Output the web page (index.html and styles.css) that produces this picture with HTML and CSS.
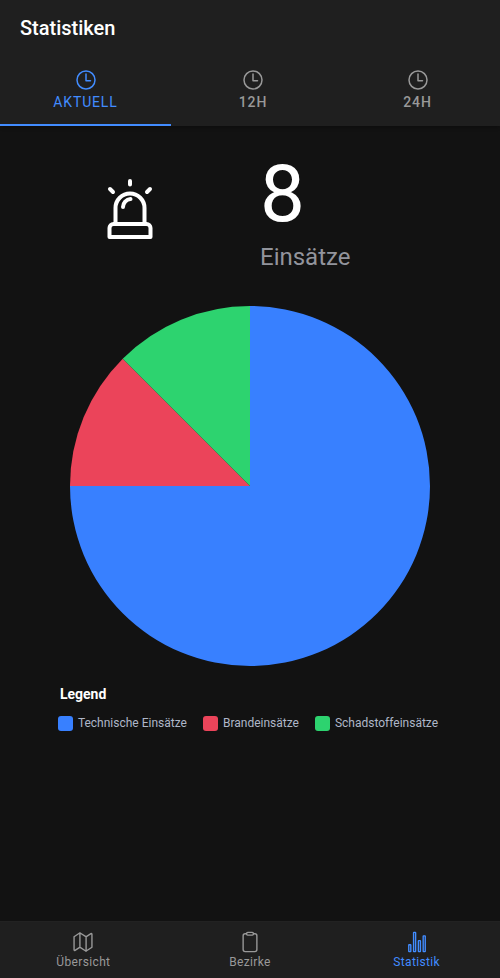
FILE: index.html
```html
<!DOCTYPE html>
<html lang="de">
<head>
<meta charset="utf-8">
<meta name="viewport" content="width=device-width, initial-scale=1">
<title>Statistiken</title>
<link rel="stylesheet" href="styles.css">
</head>
<body>
<header class="header">
  <h1 class="title">Statistiken</h1>
  <div class="segment">
    <button type="button" class="segment-button is-active" aria-pressed="true">
      <svg class="icon" viewBox="0 0 512 512" aria-hidden="true"><circle cx="256" cy="256" r="192"/><path d="M256 128v144h96"/></svg>
      <span>AKTUELL</span>
    </button>
    <button type="button" class="segment-button" aria-pressed="false">
      <svg class="icon" viewBox="0 0 512 512" aria-hidden="true"><circle cx="256" cy="256" r="192"/><path d="M256 128v144h96"/></svg>
      <span>12H</span>
    </button>
    <button type="button" class="segment-button" aria-pressed="false">
      <svg class="icon" viewBox="0 0 512 512" aria-hidden="true"><circle cx="256" cy="256" r="192"/><path d="M256 128v144h96"/></svg>
      <span>24H</span>
    </button>
  </div>
</header>

<main class="content">
  <section class="summary">
    <div class="summary-icon">
      <svg class="siren" viewBox="0 0 60 60" aria-hidden="true">
        <path d="M15.5 44V29a14.5 14.5 0 0 1 29 0V44"/>
        <path d="M9.500 58V49a4 4 0 0 1 4-4H46.500a4 4 0 0 1 4 4V58Z"/>
        <path d="M23 28a8 8 0 0 1 7.500-8"/>
        <path d="M30 2V5.500M10 10l3 3M50 10l-3 3"/>
      </svg>
    </div>
    <div class="summary-text">
      <div class="count">8</div>
      <div class="count-label">Einsätze</div>
    </div>
  </section>

  <section class="chart">
    <svg class="pie" viewBox="0 0 360 360" role="img" aria-label="Einsätze nach Art">
      <path class="fill-technical" d="M180 180V0A180 180 0 1 1 0 180Z"/>
      <path class="fill-fire" d="M180 180H0A180 180 0 0 1 52.720 52.720Z"/>
      <path class="fill-hazard" d="M180 180L52.720 52.720A180 180 0 0 1 180 0Z"/>
    </svg>
    <div class="legend">
      <h2 class="legend-title">Legend</h2>
      <ul class="legend-list">
        <li class="legend-item"><span class="swatch technical"></span>Technische Einsätze</li>
        <li class="legend-item"><span class="swatch fire"></span>Brandeinsätze</li>
        <li class="legend-item"><span class="swatch hazard"></span>Schadstoffeinsätze</li>
      </ul>
    </div>
  </section>
</main>

<nav class="tab-bar">
  <a class="tab" href="#uebersicht">
    <svg class="icon" viewBox="0 0 512 512" aria-hidden="true"><path d="M313.270 124.640 198.730 51.360a32 32 0 0 0-29.280.350L56.510 127.490A16 16 0 0 0 48 141.630v295.800a16 16 0 0 0 23.490 14.140l97.820-63.790a32 32 0 0 1 29.500-.240l111.860 73a32 32 0 0 0 29.270-.110l115.430-75.940a16 16 0 0 0 8.630-14.200V74.570a16 16 0 0 0-23.490-14.140l-98 63.860a32 32 0 0 1-29.240.350ZM328 128v336M184 48v336"/></svg>
    <span>Übersicht</span>
  </a>
  <a class="tab" href="#bezirke">
    <svg class="icon" viewBox="0 0 512 512" aria-hidden="true"><path d="M336 64h32a48 48 0 0 1 48 48v320a48 48 0 0 1-48 48H144a48 48 0 0 1-48-48V112a48 48 0 0 1 48-48h32"/><rect x="176" y="32" width="160" height="64" rx="26"/></svg>
    <span>Bezirke</span>
  </a>
  <a class="tab is-active" href="#statistik" aria-current="page">
    <svg class="icon" viewBox="0 0 512 512" aria-hidden="true"><rect x="64" y="320" width="48" height="160" rx="8"/><rect x="288" y="224" width="48" height="256" rx="8"/><rect x="400" y="112" width="48" height="368" rx="8"/><rect x="176" y="32" width="48" height="448" rx="8"/></svg>
    <span>Statistik</span>
  </a>
</nav>
</body>
</html>
```

FILE: styles.css
```css
:root {
  --background: #121212;
  --bar: #1f1f1f;
  --primary: #428cff;
  --technical: #3880ff;
  --fire: #eb445a;
  --hazard: #2dd36f;
}

* {
  box-sizing: border-box;
}

body {
  margin: 0;
  min-height: 100vh;
  display: flex;
  flex-direction: column;
  background: var(--background);
  color: #fff;
  font-family: Roboto, sans-serif;
}

.icon {
  fill: none;
  stroke: currentColor;
  stroke-width: 32;
  stroke-linecap: round;
  stroke-linejoin: round;
}

.header {
  background: var(--bar);
  box-shadow: 0 1px 4px rgba(0, 0, 0, 0.3);
}

.title {
  margin: 0;
  padding: 0 20px;
  font-size: 20px;
  font-weight: 500;
  line-height: 56px;
}

.segment {
  display: grid;
  grid-template-columns: 171fr 164fr 165fr;
}

.segment-button {
  display: flex;
  flex-direction: column;
  align-items: center;
  height: 70px;
  padding: 12px 0 0;
  border: 0;
  border-bottom: 2px solid transparent;
  background: none;
  color: #999;
  font: 500 14px/20px Roboto, sans-serif;
  letter-spacing: 0.06em;
}

.segment-button .icon {
  width: 24px;
  height: 24px;
}

.segment-button.is-active {
  border-bottom-color: var(--primary);
  color: var(--primary);
  font-weight: 400;
}

.content {
  flex: 1;
}

.summary {
  display: grid;
  grid-template-columns: 1fr 1fr;
  align-items: center;
  padding: 22px 10px 0;
}

.summary-icon {
  display: flex;
  justify-content: center;
}

.siren {
  width: 60px;
  height: 60px;
  margin-bottom: 2px;
  fill: none;
  stroke: #fff;
  stroke-width: 4;
  stroke-linecap: round;
  stroke-linejoin: round;
}

.summary-text {
  padding: 0 10px;
}

.count {
  margin-bottom: 3px;
  font-size: 80px;
  line-height: 92px;
}

.count-label {
  color: #92949c;
  font-size: 24px;
  line-height: 28px;
}

.chart {
  display: flex;
  flex-direction: column;
  align-items: center;
  padding-top: 35px;
}

.pie {
  display: block;
  width: 72%;
}

.fill-technical {
  fill: var(--technical);
}

.fill-fire {
  fill: var(--fire);
}

.fill-hazard {
  fill: var(--hazard);
}

.legend {
  padding: 18px 4px 0 0;
}

.legend-title {
  margin: 0 2px 10px;
  font-size: 14px;
  font-weight: 700;
  line-height: 20px;
}

.legend-list {
  display: flex;
  gap: 16px;
  margin: 0;
  padding: 0;
  list-style: none;
}

.legend-item {
  display: flex;
  align-items: center;
  gap: 5px;
  color: #afb7c8;
  font-size: 12px;
  line-height: 18px;
  white-space: nowrap;
}

.swatch {
  width: 15px;
  height: 15px;
  border-radius: 3px;
}

.swatch.technical {
  background: var(--technical);
}

.swatch.fire {
  background: var(--fire);
}

.swatch.hazard {
  background: var(--hazard);
}

.tab-bar {
  display: grid;
  grid-template-columns: repeat(3, 1fr);
  height: 57px;
  border-top: 1px solid #222;
  background: var(--bar);
}

.tab {
  display: flex;
  flex-direction: column;
  align-items: center;
  padding-top: 9px;
  color: #999;
  font-size: 12px;
  line-height: 18px;
  letter-spacing: 0.03em;
  text-decoration: none;
}

.tab .icon {
  width: 22px;
  height: 22px;
}

.tab.is-active {
  color: var(--primary);
}
```
